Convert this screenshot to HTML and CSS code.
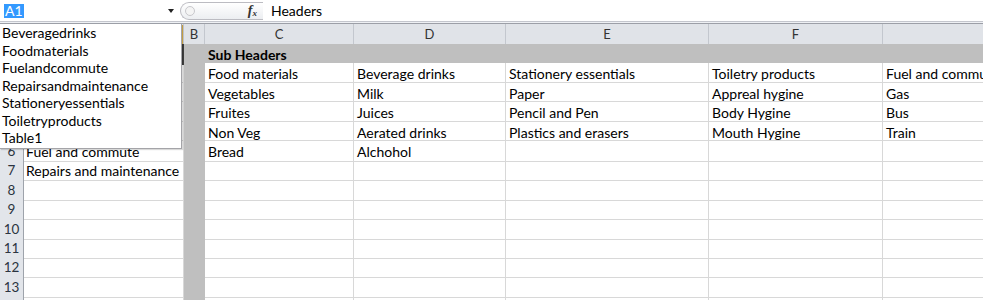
FILE: index.html
```html
<!DOCTYPE html>
<html>
<head>
<meta charset="utf-8">
<link rel="stylesheet" href="styles.css">
</head>
<body>
<div class="app">
  <div class="fbar">
    <div class="namebox"><span class="sel">A1</span><span class="arrow"></span></div>
    <div class="fxcap"><span class="grip"></span><span class="fx"><i>f</i><sub>x</sub></span></div>
    <div class="finput">Headers</div>
  </div>
  <div class="sep"></div>
  <div class="sheet">
    <div class="row hdr">
      <div class="corner"></div><div class="ch"></div><div class="ch">B</div><div class="ch">C</div><div class="ch">D</div><div class="ch">E</div><div class="ch">F</div><div class="ch last"></div>
    </div>
    <div class="row">
      <div class="rh"></div><div class="c"></div><div class="c gray"></div><div class="c gray bold">Sub Headers</div><div class="c gray"></div><div class="c gray"></div><div class="c gray"></div><div class="c gray"></div>
    </div>
    <div class="row">
      <div class="rh"></div><div class="c"></div><div class="c gray"></div><div class="c">Food materials</div><div class="c">Beverage drinks</div><div class="c">Stationery essentials</div><div class="c">Toiletry products</div><div class="c">Fuel and commute</div>
    </div>
    <div class="row">
      <div class="rh"></div><div class="c"></div><div class="c gray"></div><div class="c">Vegetables</div><div class="c">Milk</div><div class="c">Paper</div><div class="c">Appreal hygine</div><div class="c">Gas</div>
    </div>
    <div class="row">
      <div class="rh"></div><div class="c"></div><div class="c gray"></div><div class="c">Fruites</div><div class="c">Juices</div><div class="c">Pencil and Pen</div><div class="c">Body Hygine</div><div class="c">Bus</div>
    </div>
    <div class="row">
      <div class="rh"></div><div class="c"></div><div class="c gray"></div><div class="c">Non Veg</div><div class="c">Aerated drinks</div><div class="c">Plastics and erasers</div><div class="c">Mouth Hygine</div><div class="c">Train</div>
    </div>
    <div class="row">
      <div class="rh">6</div><div class="c a">Fuel and commute</div><div class="c gray"></div><div class="c">Bread</div><div class="c">Alchohol</div><div class="c"></div><div class="c"></div><div class="c"></div>
    </div>
    <div class="row">
      <div class="rh">7</div><div class="c a">Repairs and maintenance</div><div class="c gray"></div><div class="c"></div><div class="c"></div><div class="c"></div><div class="c"></div><div class="c"></div>
    </div>
    <div class="row">
      <div class="rh">8</div><div class="c"></div><div class="c gray"></div><div class="c"></div><div class="c"></div><div class="c"></div><div class="c"></div><div class="c"></div>
    </div>
    <div class="row">
      <div class="rh">9</div><div class="c"></div><div class="c gray"></div><div class="c"></div><div class="c"></div><div class="c"></div><div class="c"></div><div class="c"></div>
    </div>
    <div class="row">
      <div class="rh">10</div><div class="c"></div><div class="c gray"></div><div class="c"></div><div class="c"></div><div class="c"></div><div class="c"></div><div class="c"></div>
    </div>
    <div class="row">
      <div class="rh">11</div><div class="c"></div><div class="c gray"></div><div class="c"></div><div class="c"></div><div class="c"></div><div class="c"></div><div class="c"></div>
    </div>
    <div class="row">
      <div class="rh">12</div><div class="c"></div><div class="c gray"></div><div class="c"></div><div class="c"></div><div class="c"></div><div class="c"></div><div class="c"></div>
    </div>
    <div class="row">
      <div class="rh">13</div><div class="c"></div><div class="c gray"></div><div class="c"></div><div class="c"></div><div class="c"></div><div class="c"></div><div class="c"></div>
    </div>
    <div class="row">
      <div class="rh"></div><div class="c"></div><div class="c gray"></div><div class="c"></div><div class="c"></div><div class="c"></div><div class="c"></div><div class="c"></div>
    </div>
  </div>
  <div class="split-gold"></div>
  <div class="split-dark"></div>
  <ul class="dropdown">
    <li>Beveragedrinks</li>
    <li>Foodmaterials</li>
    <li>Fuelandcommute</li>
    <li>Repairsandmaintenance</li>
    <li>Stationeryessentials</li>
    <li>Toiletryproducts</li>
    <li>Table1</li>
  </ul>
</div>
</body>
</html>
```
FILE: styles.css
```css
html, body {
  margin: 0;
  padding: 0;
  background: #ffffff;
}
body {
  font-family: Lato, "Liberation Sans", sans-serif;
  font-size: 14px;
  color: #000;
  overflow: hidden;
}
.app {
  position: relative;
  width: 983px;
  height: 300px;
  overflow: hidden;
}
.fbar {
  display: flex;
  height: 21px;
  background: #fff;
}
.namebox {
  width: 180px;
  display: flex;
  align-items: center;
  padding-left: 4px;
  box-sizing: border-box;
  position: relative;
}
.sel {
  background: #3399ff;
  color: #fff;
  line-height: 14px;
  padding: 0 1px;
  font-size: 14px;
}
.arrow {
  position: absolute;
  left: 168px;
  top: 9px;
  width: 0;
  height: 0;
  border-left: 3.5px solid transparent;
  border-right: 3.5px solid transparent;
  border-top: 4px solid #222;
}
.fxcap {
  width: 83px;
  margin: 2px 0 1px;
  border: 1px solid #bcbcc2;
  border-right: none;
  border-radius: 10px 0 0 10px;
  background: linear-gradient(#ffffff, #eceef1);
  box-sizing: border-box;
  display: flex;
  align-items: center;
  justify-content: space-between;
  padding: 0 6px 0 4px;
}
.grip {
  width: 8px;
  height: 8px;
  border-radius: 50%;
  border: 1px solid #c8c8cc;
  background: #f4f4f4;
}
.fx {
  font-family: "Liberation Serif", serif;
  font-size: 14px;
  color: #333;
  line-height: 1;
}
.fx i {
  font-weight: bold;
}
.fx sub {
  font-size: 9px;
  font-style: italic;
  font-weight: bold;
  vertical-align: -1px;
}
.finput {
  flex: 1;
  padding-left: 8px;
  line-height: 21px;
  font-size: 14px;
}
.sep {
  height: 3px;
  box-sizing: border-box;
  border-top: 1px solid #c4c6cd;
  border-bottom: 1px solid #9c9fa7;
  background: #eef0f4;
}
.sheet {
  display: flex;
  flex-direction: column;
}
.row {
  display: grid;
  grid-template-columns: 24px 160px 21px 149px 152px 203px 174px 200px;
  height: 19.4px;
}
.row.hdr {
  height: 20px;
}
.corner, .ch {
  background: #e0e3e8;
  border-right: 1px solid #c3c7ce;
  border-bottom: 1px solid #b5b9c1;
  box-sizing: border-box;
  text-align: center;
  font-size: 13px;
  line-height: 20px;
  color: #333;
}
.ch.last {
  border-right: none;
}
.rh {
  background: #e2e5ea;
  border-right: 1px solid #9ea3ab;
  border-bottom: 1px solid #c8ccd3;
  box-sizing: border-box;
  text-align: center;
  font-size: 13.5px;
  line-height: 20px;
  color: #2b3440;
}
.c {
  border-right: 1px solid #d8d8d8;
  border-bottom: 1px solid #d8d8d8;
  box-sizing: border-box;
  padding-left: 3px;
  padding-top: 1px;
  line-height: 19px;
  white-space: nowrap;
  overflow: hidden;
}
.c.a {
  padding-left: 2px;
}
.c.gray {
  background: #bfbfbf;
  border-color: #bfbfbf;
}
.c.bold {
  font-weight: bold;
}
.split-gold {
  position: absolute;
  left: 181px;
  top: 25px;
  width: 2px;
  height: 19px;
  background: #e5b94e;
}
.split-dark {
  position: absolute;
  left: 181px;
  top: 44px;
  width: 3px;
  height: 21px;
  background: #3e3e3e;
  border-left: 1px solid #9a9a9a;
  box-sizing: border-box;
}
.dropdown {
  position: absolute;
  left: 0;
  top: 24px;
  width: 182px;
  height: 125px;
  margin: 0;
  padding: 0 0 0 2px;
  box-sizing: border-box;
  list-style: none;
  background: #fff;
  border: 1px solid #a4a4a8;
  border-left: none;
  border-top: none;
  box-shadow: 1px 1px 1px rgba(0,0,0,0.15);
}
.dropdown li {
  height: 17.5px;
  line-height: 17.5px;
  font-size: 14px;
  white-space: nowrap;
}
```
